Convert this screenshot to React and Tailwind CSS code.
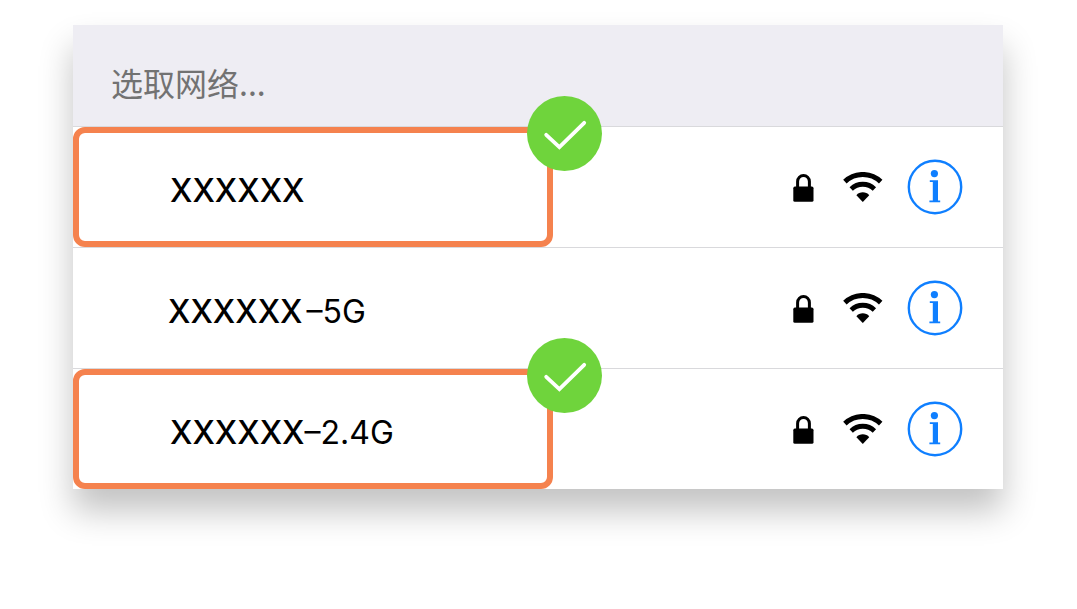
const networks = [
  { name: 'XXXXXX', suffix: '', checked: true },
  { name: 'XXXXXX', suffix: '–5G', checked: false },
  { name: 'XXXXXX', suffix: '–2.4G', checked: true },
];

function LockIcon() {
  return (
    <svg className="h-[30px] w-[22px] shrink-0" viewBox="0 -2 22 30" role="img" aria-label="Secured">
      <path d="M4.6 14V7.4a5.9 5.9 0 0 1 11.8 0V14" fill="none" stroke="#000" strokeWidth="3" />
      <rect x="0.3" y="12.6" width="20.2" height="15.2" rx="1.6" fill="#000" />
    </svg>
  );
}

function WifiIcon() {
  return (
    <svg className="h-[30px] w-10 shrink-0" viewBox="0 0 40 30" role="img" aria-label="Wi-Fi signal">
      <path d="M1.9 9.6a26 26 0 0 1 35.8 0" fill="none" stroke="#000" strokeWidth="5" />
      <path d="M8.2 16.9a16.8 16.8 0 0 1 23.2 0" fill="none" stroke="#000" strokeWidth="4.8" />
      <path d="M13.4 23.2c3-3.8 9.8-3.8 12.8 0L19.8 29.9Z" fill="#000" />
    </svg>
  );
}

function InfoIcon() {
  return (
    <svg className="size-14" viewBox="0 0 56 56" aria-hidden="true">
      <circle cx="28" cy="28" r="26.2" fill="none" stroke="#0f7fff" strokeWidth="2.4" />
      <circle cx="27.4" cy="14.6" r="3.6" fill="#0f7fff" />
      <path d="M22.8 21.2h8.2v20.3h2.2v1.7H22.4v-1.7h3.4V22.9h-3Z" fill="#0f7fff" />
    </svg>
  );
}

function CheckBadge() {
  return (
    <svg className="absolute -top-[37px] -right-[55px] z-10 size-[75px]" viewBox="0 0 75 75" role="img" aria-label="Recommended">
      <circle cx="37.5" cy="37.5" r="37.5" fill="#6fd43c" />
      <path d="M19.2 38.8 32.4 51.2 57.2 26.8" fill="none" stroke="#fff" strokeWidth="3.8" strokeLinecap="round" />
    </svg>
  );
}

function NetworkRow({ network }) {
  return (
    <li className="flex h-[121px] items-center border-t border-[#d9d9dc]">
      <div
        className={
          network.checked
            ? 'relative flex h-full w-[480px] items-center rounded-[12px] border-[6px] border-[#f5824e] pl-[91px]'
            : 'flex h-full w-[480px] items-center pl-[95px]'
        }
      >
        <span className="flex items-baseline pt-2 text-[32px] leading-10 whitespace-nowrap text-black">
          <span className="font-medium">{network.name}</span>
          <span className={network.checked ? '' : 'ml-1'}>{network.suffix}</span>
        </span>
        {network.checked && <CheckBadge />}
      </div>
      <div className="ml-auto flex items-center pr-10">
        <LockIcon />
        <span className="ml-7 flex">
          <WifiIcon />
        </span>
        <button type="button" aria-label={`${network.name}${network.suffix} details`} className="ml-6 rounded-full">
          <InfoIcon />
        </button>
      </div>
    </li>
  );
}

export default function App() {
  return (
    <main className="min-h-screen bg-white pt-[25px] pr-[74px] pb-16 pl-[73px] font-['Inter','Noto_Sans_CJK_SC',sans-serif]">
      <section className="bg-white shadow-[0_22px_32px_rgba(0,0,0,0.24)]">
        <h1 className="flex h-[101px] items-center bg-[#eeedf3] pt-3 pl-[38px] font-['Noto_Sans_CJK_SC',sans-serif] text-[32px] leading-10 font-normal text-[#727272]">
          选取网络...
        </h1>
        <ul>
          {networks.map((network) => (
            <NetworkRow key={network.name + network.suffix} network={network} />
          ))}
        </ul>
      </section>
    </main>
  );
}
